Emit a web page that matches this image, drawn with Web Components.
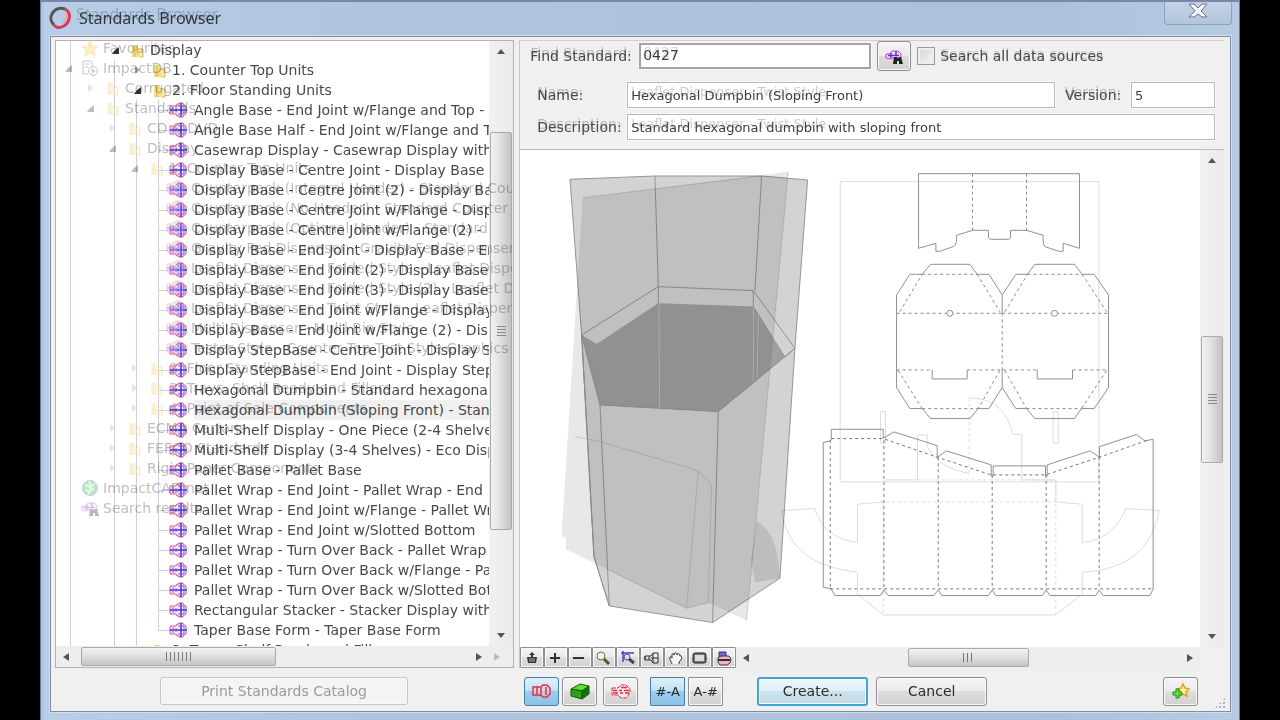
<!DOCTYPE html>
<html lang="en">
<head>
<meta charset="utf-8">
<title>Standards Browser</title>
<style>
  html, body { height: 100%; }
  body { margin: 0; background: #000; font: 14px/20px "DejaVu Sans", Verdana, sans-serif; color: #484848; }
</style>
</head>
<body>
<standards-browser></standards-browser>
<script>
const define = (name, html, setup) => {
  const tpl = document.createElement('template');
  tpl.innerHTML = html;
  customElements.define(name, class extends HTMLElement {
    constructor() {
      super();
      this.attachShadow({ mode: 'open' }).append(tpl.content.cloneNode(true));
    }
    connectedCallback() {
      if (setup && !this.ready) { this.ready = true; setup(this, this.shadowRoot); }
    }
  });
};

/* ---------- icons ---------- */
const ICONS = {
  item: `<path d="M1 4h6l1-2h2V1h4v1l3 2v8l-3 2v1h-4v-1H8l-1-2H1z" fill="#fdeaf4" stroke="#e2557f"/><path d="M1 8h17M12 1v14" stroke="#3c34dc" stroke-width="1.500"/><path d="M4 5v6M7 6v4M9 4h6M9 12h6M15 4v8" stroke="#7a5ae0"/>`,
  folder: `<path d="M4 3h6v3h3v9H4z" fill="#f6dc85"/><path d="M7 3v12M10 7h5v8h-3" stroke="#d9b659" fill="#fae9ae"/>`,
  star: `<path d="M9 1l2.400 5 5.600.6-4.200 3.700 1.300 5.500L9 13l-5.100 2.800 1.300-5.500L1 6.600 6.600 6z" fill="#ffc83e" stroke="#f2a92a"/>`,
  db: `<path d="M2 1h7l2 2v3M2 1v13h5M4 4h4M4 7h3" fill="none" stroke="#555"/><circle cx="12" cy="11" r="4.500" fill="#eee" stroke="#555"/><path d="M11 8v6l3-3z" fill="#555"/>`,
  globe: `<circle cx="9" cy="8" r="7.500" fill="#1fa868" stroke="#3a68a8"/><path d="M4 5l5 2 4-3M4 10l4 1 5-2M8 1l2 6-3 8" stroke="#b5f290" stroke-width="2" fill="none"/>`,
  find: `<path d="M1 6h4l2-3h6l3 3v4H8l-2 1-5-1z" fill="#f3dafa" stroke="#d03cc0"/><path d="M3 7.500h11M6 5v5M11 3v5" stroke="#5a35d0" stroke-width="1.500"/><path d="M8 16l1-7h3l1 2 1-2h2l2 7h-4v-3h-2v3z" fill="#222"/>`,
  fit: `<path d="M8 2l3 3H9v2h4l-1 6H4L3 7h4V5H5z" fill="#333"/><path d="M5 9h6M5 11h6" stroke="#ccc" stroke-width=".8"/>`,
  plus: `<path d="M7 3v10M2 8h10" stroke="#333" stroke-width="2"/>`,
  minus: `<path d="M1 8h11" stroke="#333" stroke-width="2"/>`,
  lens: `<circle cx="5" cy="6" r="4" fill="#f6f5d8" stroke="#666"/><path d="M8 9l5 5" stroke="#55562a" stroke-width="3"/>`,
  lensbox: `<path d="M3 12V3h11M1 3h3M3 1v3" fill="none" stroke="#4545c0" stroke-width="1.500"/><circle cx="7" cy="7" r="3" fill="#ddd" stroke="#4545c0"/><path d="M9 9l5 4" stroke="#454545" stroke-width="3"/>`,
  design: `<path d="M1 6h6l2-3h5v10H9l-2-3H1zM9 3v10M5 6v4M7 8h7M1 6v4" fill="none" stroke="#333"/>`,
  hand: `<path d="M4 14c0-2-3-4-2-7 1-1 2 0 2 1V5c0-2 2-2 2 0 0-3 3-3 3 0 0-2 3-2 3 1 2-1 2 2 1 4l-2 2v2" fill="#f5f5f5" stroke="#333"/>`,
  screen: `<rect x="1" y="3" width="13" height="10" rx="2" fill="#777" stroke="#222"/><rect x="3" y="5" width="9" height="6" fill="#ddd"/>`,
  layers: `<path d="M3 2h7v5H3z" fill="#6b6bd8" stroke="#33338a"/><path d="M2 8l3-2h8l2 3-1 4-3 2H4l-2-3z" fill="#f0b5c5" stroke="#52304a"/><path d="M2 10h12" stroke="#333" stroke-width="2"/>`,
  redbox: `<path d="M1 5h8l2-2h4l3 3v6l-3 3h-4l-2-2H1zM5 5v8M9 5v8M14 5v8" fill="#f7c4d0" fill-opacity=".5" stroke="#e0304a" stroke-width="1.500"/>`,
  cube: `<path d="M1 7l9-5 9 2-7 5z" fill="#5ee02a" stroke="#155c08"/><path d="M1 7l11 2v8L1 14z" fill="#27a514" stroke="#155c08"/><path d="M12 9l7-5v8l-7 5z" fill="#11760a" stroke="#155c08"/>`,
  redlines: `<path d="M1 6h6l3-3h5l4 4v4l-4 5h-5l-3-3H1z" fill="#fbe6ea" stroke="#e0304a" stroke-dasharray="4 1"/><path d="M2 8.500h4M8 8.500h3M13 8.500h5M2 11h5M9 11h3M14 11h4M10 5.500h6" stroke="#e0304a" stroke-width="1.500"/>`,
  addstar: `<path d="M12 2l2 4 4 1-3 3 1 4-4-2-3 2v-5L6 7l4-1z" fill="#fff0a8" stroke="#e0a020" stroke-width="1.500"/><path d="M5 7h3v3h3v3H8v3H5v-3H2v-3h3z" fill="#5cdf45" stroke="#1d8f18"/>`,
  logo: `<path d="M17 3a10 10 0 0 0-13 5 9 9 0 0 0 2 11" fill="none" stroke="#55565e" stroke-width="3"/><path d="M17 3c7 4 5 13-1 17-4 2-8 2-10-1" fill="none" stroke="#cf3f55" stroke-width="3"/><path d="M17 6c3 3 2 8-2 11" fill="none" stroke="#f1a0ac" stroke-width="2"/>`
};
const SIZE = { redbox: [20, 18], cube: [20, 18], redlines: [20, 18], addstar: [20, 18], logo: [24, 23], item: [18, 17], folder: [18, 17], star: [18, 17], db: [18, 17], globe: [18, 17], find: [18, 17] };
define('ui-icon', `<style>:host{display:block}svg{display:block}</style>`, (el, root) => {
  const n = el.getAttribute('name'), [w, h] = SIZE[n] || [16, 16];
  root.innerHTML += `<svg width="${w}" height="${h}" viewBox="0 0 ${w} ${h}" fill="none" aria-hidden="true">${ICONS[n]}</svg>`;
});

/* ---------- scroll bar ---------- */
define('scroll-bar', `<style>
  :host{display:flex;align-items:center;background:#eeeeef;box-sizing:border-box;min-width:0;min-height:0}
  :host([vertical]){flex-direction:column;background:linear-gradient(90deg,#f1f1f2,#ebebec)}
  i{width:0;height:0;border:4px solid transparent;flex:none;margin:0 7px}
  .a{border-right:6px solid #555;border-left:0}
  .b{border-left:6px solid #555;border-right:0}
  :host([vertical]) i{margin:8px 0}
  :host([vertical]) .a{border:4px solid transparent;border-bottom:5px solid #555;border-top:0}
  :host([vertical]) .b{border:4px solid transparent;border-top:5px solid #555;border-bottom:0}
  .t{box-sizing:border-box;align-self:stretch;border:1px solid #aaa;border-radius:2px;background:linear-gradient(#f3f3f3,#dedee0 50%,#c6c6ca);display:flex;align-items:center;justify-content:center;margin:1px 0;min-width:0;min-height:0}
  :host([vertical]) .t{background:linear-gradient(90deg,#f3f3f3,#dedee0 50%,#c2c2c6);margin:0 1px}
  .g{width:11px;height:9px;background:repeating-linear-gradient(90deg,#777 0 1px,transparent 1px 4px)}
  :host([wide]) .g{width:26px}
  :host([vertical]) .g{width:9px;height:10px;background:repeating-linear-gradient(#888 0 1px,transparent 1px 3px)}
</style><i class="a"></i><span class="s"></span><span class="t"><span class="g"></span></span><span class="e"></span><i class="b"></i>`, (el, root) => {
  const [s, t, e] = el.getAttribute('split').split(' ');
  root.querySelector('.s').style.flex = s + ' 1 0';
  root.querySelector('.t').style.flex = t + ' 1 0';
  root.querySelector('.e').style.flex = e + ' 1 0';
});

/* ---------- tree ---------- */
define('tree-row', `<style>
  :host{display:flex;height:20px;align-items:center;white-space:nowrap}
  .x,.i{width:22px;flex:none;display:flex;justify-content:center;align-items:center;height:20px}
  .i.item{justify-content:flex-start}
  .i.item ui-icon{margin-left:-1px}
  .x.open::before{content:"";border:4px solid transparent;border-right-color:#333;border-bottom-color:#333;border-top-width:3px;border-left-width:3px}
  .x.shut::before{content:"";border:4px solid transparent;border-left:5px solid #aaa;border-right:0}
  .x.leaf{background:linear-gradient(#cfcfe0,#cfcfe0) 10px 0/1px 100% no-repeat,linear-gradient(#cfcfe0,#cfcfe0) 10px 10px/12px 1px no-repeat}
  .x.last{background:linear-gradient(#cfcfe0,#cfcfe0) 10px 0/1px 10px no-repeat,linear-gradient(#cfcfe0,#cfcfe0) 10px 10px/12px 1px no-repeat}
  .t{margin-left:2px}
  :host([selected]) .t{background:#f0f0f0;flex:1 0 auto}
</style><span class="x"></span><span class="i"></span><span class="t"><slot></slot></span>`, (el, root) => {
  el.style.paddingLeft = el.getAttribute('level') * 22 + 'px';
  root.querySelector('.x').classList.add(el.getAttribute('mark') || 'none');
  const i = root.querySelector('.i');
  i.classList.add(el.getAttribute('icon'));
  i.innerHTML = `<ui-icon name="${el.getAttribute('icon')}"></ui-icon>`;
});
const row = ([level, icon, mark, text, extra]) => `<tree-row role="treeitem" level="${level}" icon="${icon}" mark="${mark}" ${extra || ''}>${text}</tree-row>`;
const leaf = t => [4, 'item', 'leaf', t];
const ROWS = [
  [2, 'folder', 'open', 'Display'],
  [3, 'folder', 'shut', '1. Counter Top Units'],
  [3, 'folder', 'open', '2. Floor Standing Units'],
  ...['Angle Base - End Joint w/Flange and Top - Angle Base', 'Angle Base Half - End Joint w/Flange and Top',
    'Casewrap Display - Casewrap Display with', 'Display Base - Centre Joint - Display Base - Centre',
    'Display Base - Centre Joint (2) - Display Base', 'Display Base - Centre Joint w/Flange - Display',
    'Display Base - Centre Joint w/Flange (2) -', 'Display Base - End Joint - Display Base - End',
    'Display Base - End Joint (2) - Display Base', 'Display Base - End Joint (3) - Display Base',
    'Display Base - End Joint w/Flange - Display', 'Display Base - End Joint w/Flange (2) - Display',
    'Display StepBase - Centre Joint - Display Step', 'Display StepBase - End Joint - Display Step',
    'Hexagonal Dumpbin - Standard hexagonal'].map(leaf),
  [4, 'item', 'leaf', 'Hexagonal Dumpbin (Sloping Front) - Standard', 'selected'],
  ...['Multi-Shelf Display - One Piece (2-4 Shelves)', 'Multi-Shelf Display (3-4 Shelves) - Eco Display',
    'Pallet Base - Pallet Base', 'Pallet Wrap - End Joint - Pallet Wrap - End', 'Pallet Wrap - End Joint w/Flange - Pallet Wrap',
    'Pallet Wrap - End Joint w/Slotted Bottom', 'Pallet Wrap - Turn Over Back - Pallet Wrap',
    'Pallet Wrap - Turn Over Back w/Flange - Pallet', 'Pallet Wrap - Turn Over Back w/Slotted Bottom',
    'Rectangular Stacker - Stacker Display with'].map(leaf),
  [4, 'item', 'last', 'Taper Base Form - Taper Base Form'],
  [3, 'folder', 'none', '3. Trays, Shelf Ready and Fillers']
];
const FADED = [
  [0, 'star', 'none', 'Favourites'], [0, 'db', 'open', 'ImpactDB'],
  [1, 'folder', 'shut', 'Corrugated'], [1, 'folder', 'open', 'Standards'],
  [2, 'folder', 'shut', 'CD &amp; DVD'], [2, 'folder', 'open', 'Display'],
  [3, 'folder', 'open', '1. Counter Top Units'],
  ...['Counterpack (Integral Header) - Standard Counter', 'Counterpack (No Header) - Standard Counter',
    'Counterpack (Optional Header) - Standard', 'Gravity Fed Dispenser - Gravity Fed Dispenser',
    'Leaflet Dispenser - Folded Style - Leaflet Dispenser', 'Leaflet Dispenser - Folded Style (2) - Leaflet Dispenser',
    'Leaflet Dispenser - Twist Style - Leaflet Dispenser', 'Multi Dispenser - Multi Bin Style',
    'Tester Style - Counter Top Test Style Graphics'].map(t => [4, 'item', 'none', t]),
  [3, 'folder', 'shut', '2. Floor Standing Units'], [3, 'folder', 'shut', '3. Trays, Shelf Ready and Fillers'],
  [3, 'folder', 'shut', '4. Point of Sale Components'],
  [2, 'folder', 'shut', 'ECMA Cartons'], [2, 'folder', 'shut', 'FEFCO Standards'], [2, 'folder', 'shut', 'Rigid Paper Components'],
  [0, 'globe', 'none', 'ImpactCAD.net'], [0, 'find', 'none', 'Search results']
];
define('standards-tree', `<style>
  :host{display:grid;grid-template:minmax(0,1fr) 21px/minmax(0,1fr) 24px;border:1px solid #aeb2bb;background:#fff;position:relative;box-sizing:border-box;min-height:0;overflow:hidden}
  .list{overflow:hidden;padding-left:4px;margin-top:-1px;min-height:0;background:linear-gradient(#cfcfdc,#cfcfdc) 14px 0/1px 100% no-repeat,linear-gradient(#cfcfdc,#cfcfdc) 58px 20px/1px 100% no-repeat,linear-gradient(#cfcfdc,#cfcfdc) 80px 60px/1px 100% no-repeat}
  .faded{position:absolute;inset:-3px 1px 22px 0;padding-left:1px;overflow:hidden;opacity:.32;color:#333;pointer-events:none}
  .corner{background:#eeeeef;display:flex;align-items:center}
  .corner::before{content:"";border:4px solid transparent;border-left:6px solid #bbb;border-right:0;margin-left:5px}
</style><div class="list" role="tree" aria-label="Standards">${ROWS.map(row).join('')}</div>
<scroll-bar vertical split="71 400 96"></scroll-bar>
<scroll-bar wide split="5 194 194"></scroll-bar><span class="corner"></span>
<div class="faded">${FADED.map(row).join('')}</div>`);

/* ---------- fields and buttons ---------- */
define('text-field', `<style>
  :host{display:flex;align-items:center;position:relative;min-width:0}
  label{flex:none;width:var(--label,90px);text-shadow:0 -3px rgba(60,60,60,.3)}
  div{flex:1;min-width:0;position:relative;display:flex}
  input{box-sizing:border-box;width:100%;min-width:0;height:26px;padding:0 3px;border:1px solid #b9b9bd;background:#fff;outline:1px solid #f8f8f8;font:var(--size,13px) "DejaVu Sans",Verdana,sans-serif;color:#3c3c3c}
  :host([strong]) input{border:2px solid #a4a4a4;padding:0 2px 3px;text-shadow:0 -3px rgba(60,60,60,.2)}
  span{position:absolute;left:4px;top:0;font-size:13px;line-height:20px;opacity:.28;white-space:nowrap;pointer-events:none}
</style><label for="f"></label><div><input id="f" type="text"><span></span></div>`, (el, root) => {
  root.querySelector('label').textContent = el.getAttribute('label');
  root.querySelector('input').value = el.getAttribute('value');
  const trace = el.getAttribute('trace'), s = root.querySelector('span');
  if (trace) s.textContent = trace; else s.remove();
});
define('push-button', `<style>
  :host{display:block}
  button{box-sizing:border-box;display:flex;align-items:center;justify-content:center;width:100%;height:100%;padding:0;border:1px solid #8e8f93;border-radius:3px;background:linear-gradient(#f4f4f4,#ebebeb 49%,#dddddd 50%,#d2d2d2);box-shadow:inset 0 0 0 1px #fafafa;font:14px "DejaVu Sans",Verdana,sans-serif;color:#2c2c2c}
  :host([tool]) button{border-radius:1px;font-size:13px}
  :host([on]) button{border-color:#4c7f9e;background:linear-gradient(#dcf0fb,#bfe2f6 49%,#98cdec 50%,#8cc4e6);box-shadow:none}
  :host([primary]) button{border:2px solid #3fa6cd;background:linear-gradient(#edf7fb,#dfeff6 49%,#cde2ec 50%,#c0dae6)}
  button:disabled{background:#f4f4f4;border-color:#c6c6c6;color:#9a9a9a}
</style><button type="button"><slot></slot></button>`, (el, root) => {
  const b = root.querySelector('button');
  b.disabled = el.hasAttribute('disabled');
  if (el.hasAttribute('label')) b.setAttribute('aria-label', el.getAttribute('label'));
});
define('check-option', `<style>
  :host{display:flex;align-items:center;gap:5px}
  input{appearance:none;width:18px;height:18px;margin:0;border:1px solid #9a9a9a;background:linear-gradient(135deg,#d5d5d5,#f6f6f6);box-shadow:inset 0 0 0 2px #eee}
  label{text-shadow:0 -2px rgba(60,60,60,.25)}
</style><input id="c" type="checkbox"><label for="c"><slot></slot></label>`);

/* ---------- drawings: folded bin on the left, flat layout on the right ---------- */
define('design-preview', `<style>
  :host{display:block;background:#fff;min-width:0;min-height:0;overflow:hidden}
  svg{display:block}
  .all{width:100%;height:100%}
  path,circle{fill:none;stroke:#949494;stroke-width:1px;vector-effect:non-scaling-stroke}
  .cut{stroke:#909090}
  .fold path,.fold{stroke:#8a8a8a;stroke-dasharray:3 3}
  .old path{stroke:#dcdcdc}
  .old .d{stroke-dasharray:3 3}
  .old{mix-blend-mode:multiply}
  .none{stroke:none}
</style>
<svg class="all" viewBox="520 150 680 496" preserveAspectRatio="xMidYMin meet" role="img" aria-label="Hexagonal dumpbin preview">
 <svg x="540" y="160" width="280" height="480" viewBox="0 0 840 1440">
  <path d="M90 58L345 48H665L803 60 765 565 720 1255 518 1388 208 1338 162 1190 125 525z" style="fill:#d3d3d3"/>
  <path class="none" d="M125 525L170 552 355 430 640 440 735 592 535 755 180 735z" style="fill:#a0a0a0"/>
  <path d="M125 525L355 380 640 392 765 565M355 380V430M640 392V440L735 592 765 565M345 48L355 380M665 48L645 392M125 525L180 735 535 755 765 565"/>
  <path d="M357 430L359 745M641 440L640 665M655 465L652 655" style="stroke:#bdbdbd"/>
  <path d="M180 735L208 1338M535 755L518 1388M125 525L162 1190 208 1338"/>
  <path class="none" d="M128 113L745 35 620 1382 505 1328 440 1345 78 1168V1135L65 1125z" style="fill:#000;fill-opacity:.09"/>
  <path d="M105 830L180 845 475 932 515 975 505 1328 440 1345 475 932M128 113L665 48M745 35L620 1382M205 1230L440 1345" style="stroke:#777;stroke-opacity:.3"/>
  <path class="none" d="M650 1082C690 1110 715 1150 720 1255L645 1268 633 1200z" style="fill:#000;fill-opacity:.1"/>
 </svg>
 <svg x="770" y="160" width="460" height="480" viewBox="0 0 1380 1440">
  <g class="old">
   <path d="M211 65H987V966H211zM332 755H347V850H332zM850 755H865V850H850z"/>
   <path d="M345 960H443V825H472V860C500 910 540 930 598 940M598 713C690 720 710 760 730 824H756V960H858V1026M345 966V960"/>
   <path class="d" d="M598 713V940M443 960H858M858 960V1365M340 1026V1365M330 1026H858"/>
   <path d="M35 1052L135 1046C150 1100 190 1140 263 1147V1033L340 1026M858 1026L937 1033V1147C1000 1145 1050 1100 1067 1046L1168 1052C1150 1160 1080 1230 937 1237V1303L858 1365H340L263 1303V1237C120 1220 50 1160 35 1052"/>
  </g>
  <path class="cut" d="M446 265V41H929V265L880 250V274H868L825 260C818 250 820 240 820 226L770 211H722V232Q722 238 714 238H664Q656 238 656 232V211H608L560 226C560 245 560 255 550 260L510 274H498V250z"/>
  <path class="cut" d="M380 405L420 343H457L482 313H600L622 343H657L697 405 738 343H773L795 313H914L937 343H973L1016 405V683L973 746H935L914 776H795L770 746H738L697 683 657 746H625L600 776H482L457 746H420L380 683zM487 630V657H592V630M802 630V657H908V630M697 405V460M697 630V683"/>
  <g class="fold"><path d="M608 41V211M770 41V211M457 343H622M773 343H937M390 455L457 343M622 343L690 455M705 455L773 343M937 343L1010 455M380 460H697M697 460H1016M697 460V630M380 630H487M592 630H802M908 630H1016M385 632L457 746M690 632L625 746M705 632L770 746M1010 632L935 746M457 746H625M770 746H935"/></g>
  <circle class="cut" cx="540" cy="460" r="9" style="fill:#fff"/><circle class="cut" cx="854" cy="460" r="9" style="fill:#fff"/>
  <path class="cut" d="M184 840V808H340V835L372 816 502 857V892L530 873 664 915V948H670V918H827V948H832V915L960 873 989 892V860L1100 824 1125 843 1150 838V1287L1140 1307H1000L988 1290 978 1307H840L829 1290 818 1307H678L667 1290 656 1307H516L505 1290 492 1307H355L342 1290 332 1307H195L184 1287 160 1282V848L184 842"/>
  <g class="fold"><path d="M184 836H340L502 892 664 945H827L989 892 1130 842M181 840V1287M342 840V1287M505 892V1287M667 945V1287M829 945V1287M988 892V1287M181 1287H1150" style="stroke:#777"/></g>
 </svg>
</svg>`);

/* ---------- window ---------- */
const TOOLS = [['fit', 'Fit to window'], ['plus', 'Zoom in'], ['minus', 'Zoom out'], ['lens', 'Zoom'], ['lensbox', 'Zoom to area'],
  ['design', 'Show design'], ['hand', 'Pan'], ['screen', 'Full view'], ['layers', 'Layers']];
define('standards-browser', `<style>
  :host{display:flex;flex-direction:column;box-sizing:border-box;min-height:100vh;height:100vh;margin:0 40px;padding:0 8px 8px 9px;border-top:2px solid #7488a8;border-left:1px solid #667a92;border-right:1px solid #667a92;background:linear-gradient(90deg,#9dc3ea,#b9cde6 4px,#afc3dd 30%,#aec1dc 85%,#b8cbe4)}
  header{display:flex;height:34px;flex:none;align-items:center;color:#2f353f}
  header ui-icon{margin:0 0 3px -2px}
  h1{margin:0 auto 2px 7px;font:16px/20px "Noto Sans","Open Sans",sans-serif;text-shadow:-3px -4px rgba(60,70,90,.3)}
  .close{align-self:flex-start;width:68px;height:23px;margin-right:-1px;padding:0;border:1px solid #8c9fba;border-top:0;border-radius:0 0 4px 4px;background:linear-gradient(#c5d2e4,#b2c4dc);display:flex;justify-content:center;align-items:flex-start}
  main{flex:1;min-height:0;display:grid;grid-template:minmax(0,1fr) 43px/minmax(0,459fr) minmax(0,705fr);column-gap:6px;padding:3px 6px 0 5px;background:#f0f0f0;border:1px solid #7f8da3;outline:1px solid #d3deec}
  standards-tree{margin-left:-1px}
  .right{display:flex;flex-direction:column;min-height:0;border-left:1px solid #c5c5c5;border-top:1px solid #d0d0d0;margin-left:-1px}
  .find{display:flex;height:30px;align-items:center;padding-left:10px}
  .find text-field{width:341px;--label:109px;--size:14px}
  .find push-button{width:34px;height:30px;margin:0 6px}
  .details{display:grid;grid-template-columns:minmax(0,518fr) minmax(0,150fr);gap:6px 10px;padding:11px 9px 9px 17px;border-bottom:1px solid #bbb}
  .version{--label:66px}
  .wide{grid-column:1/3}
  .view{flex:1;min-height:0;display:grid;grid-template:minmax(0,1fr) 21px/minmax(0,1fr) 24px}
  .bar{display:flex;grid-column:1/2}
  .bar push-button{width:24px;height:21px}
  .bar scroll-bar{flex:1}
  .actions{display:flex;align-items:center;justify-content:center;padding-top:3px}
  .print{width:248px;height:28px;margin-right:2px}
  .foot{display:flex;align-items:center;padding:3px 4px 0 4px;gap:3px}
  .foot push-button{width:35px;height:29px;flex:none}
  .foot .sp{margin-left:3px}.foot .sp2{margin-left:9px}
  .foot .wide1{width:111px;margin-left:31px}.foot .wide2{width:111px;margin-left:5px}
  .foot .end{margin-left:auto}
  .grip{width:12px;height:12px;align-self:flex-end;margin:0 -6px 2px 13px;background:radial-gradient(circle,#aab 1px,transparent 1px) 0 0/4px 4px;clip-path:polygon(100% 0,100% 100%,0 100%)}
</style>
<header><ui-icon name="logo"></ui-icon><h1>Standards Browser</h1>
 <button class="close" type="button" aria-label="Close"><svg width="20" height="18" viewBox="0 0 20 18"><path d="M1 2h5l4 4 4-4h5l-6 7 6 6h-5l-4-3-4 3H1l6-6z" fill="#f5f7fa" stroke="#62708a"/></svg></button></header>
<main>
 <standards-tree></standards-tree>
 <section class="right">
  <div class="find"><text-field strong label="Find Standard:" value="0427"></text-field>
   <push-button label="Find"><ui-icon name="find"></ui-icon></push-button>
   <check-option>Search all data sources</check-option></div>
  <div class="details">
   <text-field label="Name:" value="Hexagonal Dumpbin (Sloping Front)" trace="Leaflet Dispenser - Twist Style"></text-field>
   <text-field class="version" label="Version:" value="5"></text-field>
   <text-field class="wide" label="Description:" value="Standard hexagonal dumpbin with sloping front" trace="Leaflet Dispenser - Twist Style"></text-field>
  </div>
  <div class="view">
   <design-preview></design-preview>
   <scroll-bar vertical split="166 125 164"></scroll-bar>
   <div class="bar">${TOOLS.map(([n, l]) => `<push-button tool label="${l}"><ui-icon name="${n}"></ui-icon></push-button>`).join('')}
    <scroll-bar split="152 118 151"></scroll-bar></div>
  </div>
 </section>
 <div class="actions"><push-button class="print" disabled>Print Standards Catalog</push-button></div>
 <div class="foot">
  <push-button on label="Flat view"><ui-icon name="redbox"></ui-icon></push-button>
  <push-button label="Solid view"><ui-icon name="cube"></ui-icon></push-button>
  <push-button class="sp" label="Outline view"><ui-icon name="redlines"></ui-icon></push-button>
  <push-button class="sp2" tool on>#-A</push-button>
  <push-button tool>A-#</push-button>
  <push-button class="wide1" primary>Create...</push-button>
  <push-button class="wide2">Cancel</push-button>
  <push-button class="end" label="Add to favourites"><ui-icon name="addstar"></ui-icon></push-button>
  <span class="grip"></span>
 </div>
</main>`);
</script>
</body>
</html>
